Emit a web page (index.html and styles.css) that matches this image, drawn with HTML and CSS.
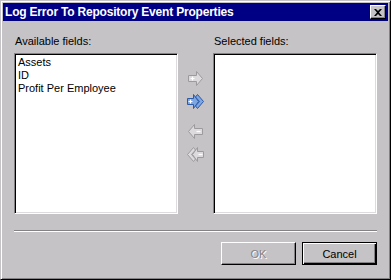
FILE: index.html
```html
<!DOCTYPE html>
<html>
<head>
  <meta charset="utf-8">
  <title>Log Error To Repository Event Properties</title>
  <link rel="stylesheet" href="styles.css">
</head>
<body>
  <div class="window">
    <div class="titlebar">
      <span class="title">Log Error To Repository Event Properties</span>
      <button class="close-btn" title="Close">
        <svg width="8" height="7" viewBox="0 0 8 7"><path d="M0 0h2l2 2 2-2h2L5 3.5 8 7H6L4 5 2 7H0l3-3.5z" fill="#000"/></svg>
      </button>
    </div>

    <div class="content">
      <div class="fields">
        <div class="field-column">
          <label class="field-label">Available fields:</label>
          <div class="listbox">
            <div class="list-item">Assets</div>
            <div class="list-item">ID</div>
            <div class="list-item">Profit Per Employee</div>
          </div>
        </div>

        <div class="move-buttons">
          <!-- add selected -->
          <span class="move-btn" title="Add">
            <svg width="17" height="15" viewBox="0 0 17 15">
              <path d="M1.5 4.5h8v-4l6 7-6 7v-4h-8z" fill="#dcdadc" stroke="#9c9a9c"/>
              <path d="M5.5 5.5v4M3.5 7.5h4" stroke="#fff" stroke-width="1.2"/>
            </svg>
          </span>
          <!-- add all -->
          <span class="move-btn" title="Add all">
            <svg width="17" height="15" viewBox="0 0 17 15">
              <path d="M0.5 4.5h6v-4l5 7-5 7v-4h-6z" fill="#7ea6e0" stroke="#2a5aa8"/>
              <path d="M10.5 0.5l6 7-6 7-2-2.5 4-4.5-4-4.5z" fill="#7ea6e0" stroke="#2a5aa8"/>
              <path d="M3.5 5.5v4M1.5 7.5h4" stroke="#fff" stroke-width="1.2"/>
            </svg>
          </span>
          <!-- remove selected -->
          <span class="move-btn group-start" title="Remove">
            <svg width="17" height="15" viewBox="0 0 17 15">
              <path d="M15.5 4.5h-8v-4l-6 7 6 7v-4h8z" fill="#dcdadc" stroke="#9c9a9c"/>
              <path d="M9.5 7.5h4" stroke="#fff" stroke-width="1.2"/>
            </svg>
          </span>
          <!-- remove all -->
          <span class="move-btn" title="Remove all">
            <svg width="17" height="15" viewBox="0 0 17 15">
              <path d="M16.5 4.5h-6v-4l-5 7 5 7v-4h6z" fill="#dcdadc" stroke="#9c9a9c"/>
              <path d="M6.5 0.5l-6 7 6 7 2-2.5-4-4.5 4-4.5z" fill="#dcdadc" stroke="#9c9a9c"/>
              <path d="M11.5 7.5h4" stroke="#fff" stroke-width="1.2"/>
            </svg>
          </span>
        </div>

        <div class="field-column">
          <label class="field-label">Selected fields:</label>
          <div class="listbox"></div>
        </div>
      </div>

      <div class="separator"></div>

      <div class="dialog-buttons">
        <button class="dlg-btn" disabled>OK</button>
        <button class="dlg-btn default">Cancel</button>
      </div>
    </div>
  </div>
</body>
</html>
```

FILE: styles.css
```css
:root {
  --face: #c6c3c6;
  --shadow: #848284;
  --dark: #000;
  --light: #fff;
  --title-bg: #000084;
}

body {
  margin: 0;
  padding: 0;
  font-family: "Liberation Sans", Arial, sans-serif;
  font-size: 11px;
  color: #000;
  background-color: var(--face);
}

/* Window frame */
.window {
  width: 391px;
  height: 280px;
  box-sizing: border-box;
  background-color: var(--face);
  border: 1px solid;
  border-color: var(--face) var(--dark) var(--dark) var(--face);
  box-shadow: inset 1px 1px var(--light), inset -1px -1px var(--shadow);
  padding: 2px;
  display: flex;
  flex-direction: column;
}
.titlebar {
  height: 18px;
  background-color: var(--title-bg);
  display: flex;
  align-items: center;
  justify-content: space-between;
  padding: 0 2px;
}
.title {
  color: #fff;
  font-weight: bold;
  font-size: 12px;
  letter-spacing: -0.2px;
  white-space: nowrap;
}
.close-btn {
  width: 16px;
  height: 14px;
  padding: 0;
  margin: 0;
  background-color: var(--face);
  border: 1px solid;
  border-color: var(--light) var(--dark) var(--dark) var(--light);
  box-shadow: inset -1px -1px var(--shadow);
  display: flex;
  align-items: center;
  justify-content: center;
}

/* Dialog body */
.content {
  flex: 1;
  padding: 14px 11px 12px 11px;
  display: flex;
  flex-direction: column;
}
.fields {
  display: flex;
}
.field-column {
  display: flex;
  flex-direction: column;
  width: 164px;
}
.field-label {
  height: 13px;
  line-height: 13px;
  margin: 0 0 5px 1px;
}
.listbox {
  height: 161px;
  box-sizing: border-box;
  background-color: #fff;
  border: 1px solid;
  border-color: var(--shadow) var(--light) var(--light) var(--shadow);
  box-shadow: inset 1px 1px var(--dark), inset -1px -1px #dedbde;
  padding: 2px 2px;
}
.list-item {
  height: 13px;
  line-height: 13px;
  padding-left: 1px;
  white-space: nowrap;
}

/* Add / remove arrows */
.move-buttons {
  width: 35px;
  display: flex;
  flex-direction: column;
  align-items: center;
  padding-top: 36px;
  gap: 8px;
}
.move-btn {
  width: 17px;
  height: 15px;
  display: block;
}
.move-btn svg {
  display: block;
}
.move-btn.group-start {
  margin-top: 7px;
}

.separator {
  margin-top: 16px;
  border-top: 1px solid var(--shadow);
  border-bottom: 1px solid var(--light);
}

/* OK / Cancel */
.dialog-buttons {
  margin-top: 10px;
  display: flex;
  justify-content: flex-end;
  gap: 6px;
}
.dlg-btn {
  width: 75px;
  height: 23px;
  margin: 0;
  padding: 0;
  font-family: "Liberation Sans", Arial, sans-serif;
  font-size: 11px;
  color: #000;
  background-color: var(--face);
  border: 1px solid;
  border-color: var(--light) var(--dark) var(--dark) var(--light);
  box-shadow: inset -1px -1px var(--shadow);
}
.dlg-btn:disabled {
  color: var(--shadow);
  text-shadow: 1px 1px var(--light);
}
.dlg-btn.default {
  border-color: var(--dark);
  box-shadow: inset 1px 1px var(--light), inset -1px -1px var(--dark), inset -2px -2px var(--shadow);
}
```
